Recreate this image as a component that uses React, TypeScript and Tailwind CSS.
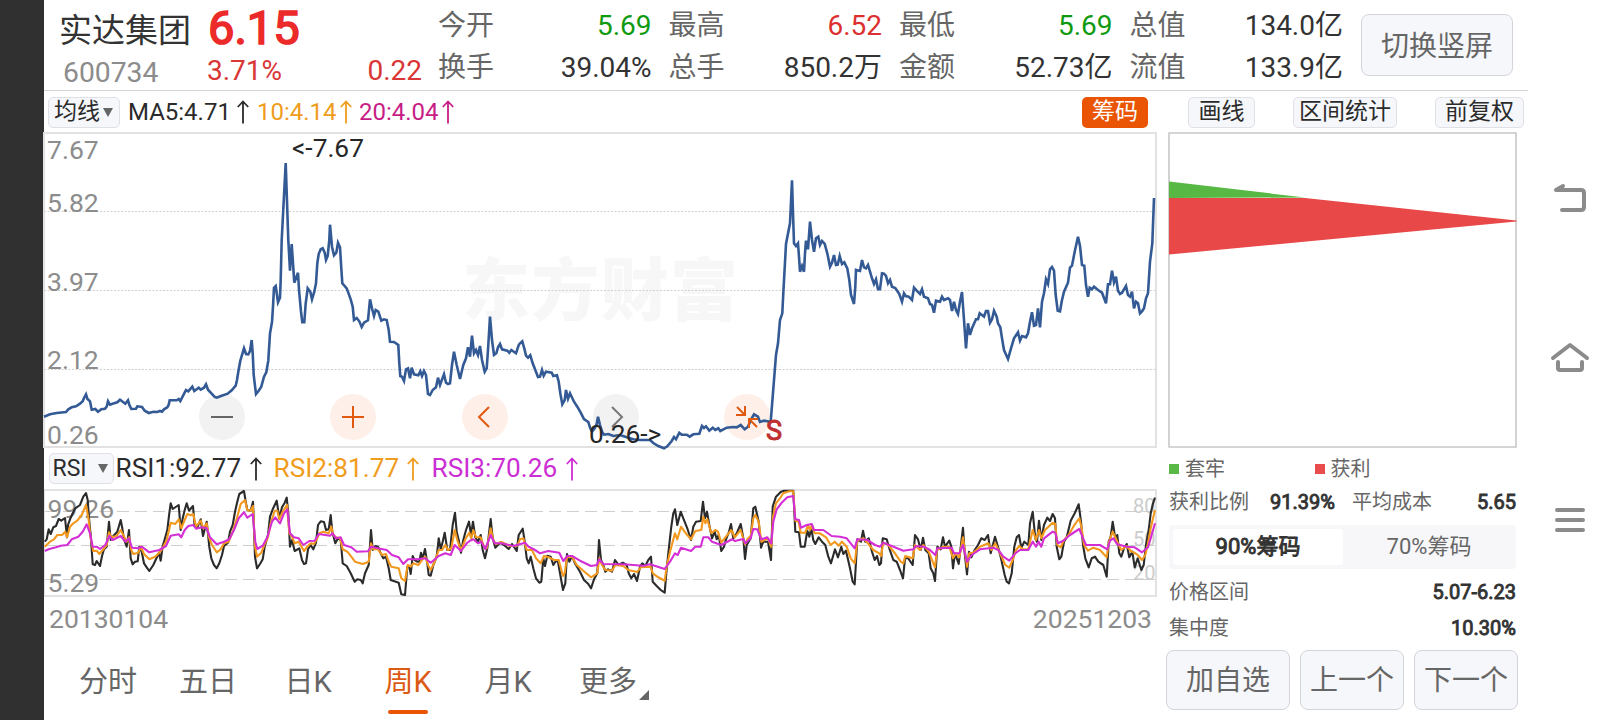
import clsx from 'clsx'

// A run of chart samples: origin in px, points in thirds of a px
type Segment = { x: number, y: number, points: string }

const price: Segment[] = [
    { x: 40, y: 240, points: '12,530 30,523 50,519 78,516 85,508 95,502 108,499 120,491 128,484 132,474 138,463 142,476 150,484 155,509 166,507 174,515 184,508 195,506 200,500 204,484 210,494 222,490 232,487 240,479 248,485 256,491 264,481 268,494 274,507 288,506 292,499 306,501 314,512 326,519 340,515 352,516 360,513 366,515 372,508 382,502 386,494 389,481 410,481 416,477 421,483 428,469 438,450 445,454 457,440 463,453 476,443 482,449 492,443 498,433 504,449 512,458 524,471 530,473 545,467 563,461 575,451 587,437 591,420 595,395 601,362 612,325 618,342 625,343 630,333 635,300 638,340 641,405 644,430 648,462 656,452 664,440 672,410 679,397 685,362 690,280 696,246 699,200 702,143 707,138 711,165 714,187 720,173 722,120 725,0 737,-231 745,0 750,92 755,12 763,128 774,98 777,150 783,215 787,247 793,247 797,190 803,145 811,155 816,178 823,155 828,130 832,70 836,42 842,28 848,25 854,38 858,60 863,48 868,0 870,-46 876,20 882,46 889,38 894,8 900,22 904,85 907,130 920,145 932,178 938,200 942,240 950,234 958,244 965,261 972,248 984,241 990,178 996,205 1002,228 1007,210 1015,215 1024,242 1032,238 1040,240 1046,270 1050,305 1062,306 1075,315 1078,370 1081,408 1086,410 1092,423 1098,388 1104,385 1110,415 1115,383 1122,403 1135,406 1141,394' },
    { x: 420, y: 240, points: '6,408 12,393 18,405 24,462 30,465 38,450 48,442 54,413 60,435 72,403 78,428 84,432 90,430 96,375 102,335 110,375 120,417 130,375 138,355 144,322 150,350 156,287 162,340 168,330 174,345 180,318 186,360 194,395 200,385 204,330 210,230 216,300 222,345 229,340 234,322 240,312 246,328 262,332 268,338 274,330 288,340 296,315 300,310 307,304 314,330 318,347 324,353 331,346 338,370 354,411 360,410 366,390 371,407 378,395 395,398 400,408 411,406 416,425 421,460 427,493 434,480 438,450 444,476 450,460 462,485 472,500 482,518 492,537 505,546 511,565 516,575 524,565 530,552 534,530 540,555 546,575 552,584 565,582 580,588 600,585 620,592 640,598 660,600 690,600 700,609 715,618 732,625 742,619 755,603 762,591 768,598 778,578 785,584 800,584 809,590 820,583 838,581 846,558 852,564 858,559 868,572 878,563 886,570 895,565 901,573 920,563 940,561 950,562 962,555 974,568 984,560 992,540 1002,523 1014,530 1020,546 1032,542 1050,545' },
    { x: 740, y: 120, points: '92,905 98,830 108,705 114,670 120,600 127,580 130,520 138,372 150,310 156,181 159,280 162,370 168,378 174,370 177,410 180,455 186,438 192,455 195,400 198,362 204,388 210,305 216,360 222,395 228,355 235,350 240,375 246,363 254,372 262,400 270,440 276,428 282,405 288,435 293,434 299,408 306,432 313,427 322,445 328,480 333,525 342,552 346,500 348,450 360,453 366,420 372,442 378,445 384,435 390,455 396,475 402,492 408,478 414,508 420,508 426,460 432,461 438,468 444,490 450,480 456,500 466,504 478,522 486,545 492,520 497,528 506,530 516,540 522,503 530,512 540,522 546,508 552,530 564,535 570,552 576,555 582,578 588,542 600,545 606,530 612,540 624,535 630,540 636,573 642,545 648,570 654,582 660,545 666,516 670,570 678,685 684,610 690,645 696,625 708,598 714,598 719,580 732,590 738,573 744,573 750,608 756,598 762,572 770,590 774,610 781,622 786,655 792,690 804,717 813,685 822,655 834,637 840,662 846,648 858,652 864,640 870,605 876,577 882,617 888,615 894,565 900,622 906,545 912,520 918,478 924,492 930,448 936,441 942,452 947,525 953,572 960,574 966,540 972,515 984,488 990,443 996,437 1004,395 1014,350 1020,378 1026,435 1033,437 1038,495 1044,530 1049,503 1056,508 1062,500 1074,510 1086,518 1098,550 1104,493 1110,493 1116,452 1122,487 1128,470 1134,512 1140,522 1146,518 1158,498 1164,525 1170,530 1176,515 1182,565 1188,545 1194,550 1200,580 1206,574 1212,565 1218,535 1224,520 1230,425 1237,370 1242,234' },
]

const rsi1: Segment[] = [
    { x: 40, y: 450, points: '14,275 20,268 26,238 32,252 40,232 48,228 56,207 64,212 75,204 81,262 84,225 90,208 98,190 106,175 120,165 130,140 138,129 143,150 147,205 152,255 158,343 165,345 170,333 180,348 186,318 192,298 200,290 207,215 212,270 220,258 232,245 242,210 247,235 252,268 260,290 267,240 272,325 278,343 285,335 293,334 298,290 305,305 312,340 320,352 328,363 340,345 357,308 362,332 368,288 374,268 382,240 388,190 392,160 398,177 416,165 422,240 428,205 434,180 440,160 447,182 459,168 464,230 472,232 482,208 489,258 500,215 508,290 514,325 522,345 530,355 538,340 546,315 552,288 564,278 570,245 578,225 585,185 592,155 598,132 612,123 617,155 622,180 632,182 639,155 645,320 651,355 660,342 668,328 674,290 684,255 690,200 698,178 710,152 718,205 726,172 734,158 740,143 745,190 750,290 756,270 764,303 778,295 786,330 792,342 798,340 804,298 812,285 820,298 828,278 834,225 842,214 852,216 858,240 866,238 872,195 877,245 886,280 894,265 902,270 908,340 920,348 932,370 944,395 952,388 962,390 968,400 975,370 986,345 993,240 998,300 1006,288 1014,290 1022,310 1030,325 1038,320 1046,355 1052,390 1076,398 1084,433 1095,435 1102,350 1108,350' },
    { x: 410, y: 450, points: '2,372 8,318 14,330 22,335 28,335 33,308 38,325 45,297 52,340 56,375 62,377 70,345 80,320 86,265 92,297 98,275 104,248 112,300 120,300 128,225 135,188 140,245 146,270 153,308 160,270 168,240 177,215 183,255 189,215 196,262 204,275 212,255 218,300 225,325 232,295 237,250 242,207 248,265 256,293 270,278 282,285 296,297 306,282 320,303 326,255 338,236 344,275 350,325 356,340 362,320 370,355 378,385 388,398 394,395 400,325 405,348 412,317 422,320 430,345 438,332 444,335 450,370 459,420 466,400 471,312 478,335 486,318 496,342 510,365 522,390 535,402 543,415 552,388 562,370 567,270 573,330 580,345 586,365 594,358 606,365 615,330 626,345 638,338 650,345 656,370 664,385 672,372 681,393 690,350 697,340 706,348 715,330 723,320 728,395 740,408 752,420 764,428 769,370 775,310 784,230 790,190 795,178 802,225 812,185 820,205 832,235 843,270 850,230 858,215 872,213 879,155 885,205 891,185 898,225 906,265 914,245 920,268 926,255 934,303 942,290 948,268 956,248 963,222 970,265 980,250 992,222 1000,265 1005,327 1010,285 1022,265 1030,175 1036,170 1046,215 1053,293 1060,275 1074,275 1083,330 1088,170 1098,140 1112,126' },
    { x: 780, y: 450, points: '12,122 40,122 46,245 57,247 62,290 74,290 82,242 88,260 94,235 100,270 106,282 116,262 126,275 136,285 145,320 153,340 165,298 174,322 184,290 190,312 198,302 210,355 218,395 224,403 232,268 243,275 249,242 256,275 266,265 276,305 284,330 291,318 298,345 303,340 308,265 320,268 328,295 340,330 350,335 360,360 369,385 375,325 385,325 398,345 405,255 414,268 422,300 429,263 436,300 446,310 452,355 460,370 465,393 472,290 482,298 489,262 495,290 508,272 514,290 519,355 525,310 536,342 549,233 554,310 561,373 567,305 574,322 584,300 594,285 604,265 614,270 624,255 632,310 645,260 654,290 663,325 674,375 680,395 687,400 695,370 703,290 710,262 717,255 724,293 733,275 745,285 750,220 758,185 766,265 771,275 777,212 784,270 792,225 802,203 810,213 818,192 825,205 830,290 838,328 844,320 852,275 860,262 872,212 884,190 896,163 903,215 909,285 916,325 926,352 935,325 945,320 955,335 970,345 980,380 986,275 992,260 998,215 1006,265 1012,255 1018,310 1024,320 1032,295 1040,282 1048,322 1057,305 1064,352 1073,325 1084,360 1091,345 1098,285 1106,240 1112,190 1119,160 1125,143' },
]

const rsi2: Segment[] = [
    { x: 40, y: 450, points: '14,290 30,275 42,268 52,255 66,255 76,245 81,262 90,230 100,220 112,212 125,195 138,165 146,210 152,265 160,303 170,302 178,312 188,300 200,285 207,247 214,262 230,258 242,240 250,255 260,275 267,262 274,300 280,312 295,308 302,290 312,312 328,328 345,320 358,308 366,298 380,270 392,218 406,222 416,208 424,235 434,210 442,192 452,196 460,192 468,230 482,212 490,235 500,220 506,260 516,285 530,307 542,298 552,280 566,275 580,240 592,200 602,162 615,150 622,180 632,182 639,168 645,290 651,320 664,308 674,282 684,262 692,220 704,182 712,182 718,208 728,185 741,165 748,250 756,260 764,280 776,275 792,303 802,290 812,280 822,282 832,265 838,250 850,245 866,250 874,230 880,255 888,262 900,265 908,298 922,305 934,320 945,335 968,342 986,335 993,280 1000,298 1014,298 1026,315 1038,312 1046,335 1054,350 1076,355 1084,385 1095,393 1103,345' },
    { x: 410, y: 450, points: '2,350 10,340 25,345 40,325 46,320 54,345 62,360 72,340 86,300 96,300 106,285 114,300 124,295 134,240 142,270 153,302 166,268 178,248 184,265 190,240 198,262 212,262 222,290 230,295 242,235 250,270 258,282 274,276 300,288 322,287 330,268 340,265 350,300 366,300 378,325 392,340 402,318 416,322 432,330 446,330 459,378 464,370 471,322 486,320 500,345 520,362 543,382 562,370 568,325 576,345 586,360 606,362 616,345 640,348 655,360 682,366 692,352 722,350 728,370 745,382 764,392 770,350 780,305 795,250 802,268 813,230 826,248 843,268 856,243 874,240 880,200 886,220 892,208 904,250 916,240 924,245 934,278 946,262 964,240 974,262 992,240 1005,283 1014,265 1022,258 1030,205 1036,195 1046,215 1054,275 1074,265 1084,290 1089,200 1098,160 1112,142' },
    { x: 780, y: 450, points: '10,130 28,124 40,124 46,212 56,215 62,248 76,248 84,225 90,240 96,225 104,250 120,250 138,262 152,285 164,275 176,287 186,275 200,290 212,325 224,340 232,272 250,265 262,278 280,300 298,310 304,318 309,278 325,285 345,310 362,335 370,340 376,318 398,325 405,285 420,300 430,285 446,305 465,352 471,300 490,290 508,290 519,325 528,310 538,322 549,262 561,350 568,310 580,308 600,290 625,280 634,300 646,280 664,318 676,345 688,353 698,330 708,300 718,288 728,298 745,298 758,240 768,270 777,240 784,265 795,240 818,218 826,222 832,285 842,292 852,270 866,255 880,230 898,205 905,235 912,285 924,302 940,293 960,300 980,322 986,278 998,245 1006,262 1014,280 1024,300 1040,288 1052,303 1066,310 1073,315 1086,330 1096,315 1104,280 1112,235 1125,180' },
]

const rsi3: Segment[] = [
    { x: 40, y: 450, points: '14,303 28,297 48,292 62,287 82,285 95,268 115,260 128,245 140,223 150,250 158,290 170,290 180,297 196,285 208,258 218,270 242,258 256,275 267,265 276,293 294,295 305,290 328,307 358,300 378,288 392,257 416,253 424,262 434,240 445,228 460,225 468,236 486,232 500,235 510,262 530,283 552,275 568,268 582,240 596,205 612,187 622,203 638,192 646,275 652,297 668,287 682,262 696,215 706,202 720,220 732,190 742,178 750,250 762,262 776,265 790,285 808,273 824,272 836,252 870,257 878,250 888,265 902,262 912,285 934,292 950,305 984,304 993,290 1014,295 1040,300 1056,315 1076,322 1090,342 1104,328' },
    { x: 410, y: 450, points: '2,328 20,328 46,325 62,338 86,318 106,310 122,315 134,285 153,303 170,280 180,272 190,268 204,280 214,275 226,297 242,255 254,280 275,280 310,288 345,278 356,290 375,300 390,310 415,303 448,308 460,333 472,318 486,318 510,332 543,348 560,345 568,328 580,342 640,343 700,347 720,343 764,357 780,335 795,310 803,315 813,293 843,303 856,290 872,290 880,262 895,262 906,275 934,285 966,268 975,273 1000,267 1006,280 1022,265 1030,237 1042,238 1054,268 1072,262 1084,280 1090,215 1100,178 1112,162' },
    { x: 780, y: 450, points: '5,158 22,142 40,138 46,208 57,210 63,233 80,225 95,222 102,240 130,240 155,258 180,260 200,265 224,295 232,268 262,270 285,285 300,290 310,278 335,288 370,302 400,298 408,288 432,290 450,300 466,315 472,295 515,293 522,310 538,310 549,285 561,335 575,315 600,298 640,293 655,300 670,320 688,332 706,310 720,300 745,300 758,275 768,290 776,275 784,290 792,265 818,245 826,248 834,280 850,272 870,255 898,237 908,262 918,285 960,285 982,298 990,272 1000,265 1012,283 1040,290 1064,292 1086,307 1104,292 1112,265 1125,220' },
]

function toPoints(segments: Segment[]) {
    return segments
        .map(s => s.points
            .split(' ')
            .map(p => p.split(',').map(Number))
            .map(([x, y]) => `${(s.x + x / 3).toFixed(1)},${(s.y + y / 3).toFixed(1)}`)
            .join(' '))
        .join(' ')
}

interface Quote {
    label: string,
    value: string,
    color: string,
}

const quotes: Quote[][] = [
    [
        { label: '今开', value: '5.69', color: 'text-[#109a10]' },
        { label: '换手', value: '39.04%', color: 'text-[#333]' },
    ],
    [
        { label: '最高', value: '6.52', color: 'text-[#dc3030]' },
        { label: '总手', value: '850.2万', color: 'text-[#333]' },
    ],
    [
        { label: '最低', value: '5.69', color: 'text-[#109a10]' },
        { label: '金额', value: '52.73亿', color: 'text-[#333]' },
    ],
    [
        { label: '总值', value: '134.0亿', color: 'text-[#333]' },
        { label: '流值', value: '133.9亿', color: 'text-[#333]' },
    ],
]

function Header() {
    return (
        <header className="flex h-[91px] border-b border-[#d4d4d4]">
            <div className="w-[163px] pl-[15px]">
                <div className="h-[52px] pt-[6px] text-[33px] leading-[50px] text-[#333] whitespace-nowrap">实达集团</div>
                <div className="pl-[4px] text-[28.3px] leading-[41px] text-[#8c8c8c]">600734</div>
            </div>
            <div className="w-[215px]">
                <div className="h-[50px] pl-[1px] text-[47px] leading-[55px] text-[#ec2a2a] [-webkit-text-stroke:1.7px]">6.15</div>
                <div className="flex justify-between text-[28px] leading-[41px] text-[#d93636]">
                    <span>3.71%</span>
                    <span>0.22</span>
                </div>
            </div>
            <div className="flex gap-[17px] pl-[16px] pt-[5px]">
                {quotes.map((group, i) => (
                    <div key={i} className="w-[213.5px]">
                        {group.map(q => (
                            <div key={q.label} className="flex justify-between text-[28px] leading-[42px]">
                                <span className="text-[#666]">{q.label}</span>
                                <span className={q.color}>{q.value}</span>
                            </div>
                        ))}
                    </div>
                ))}
            </div>
            <button className="ml-[18px] mt-[14px] h-[62px] w-[152px] rounded-lg border border-[#d3d5dc] bg-[#f6f7fa] pt-[3px] text-[28px] text-[#666]">
                切换竖屏
            </button>
        </header>
    )
}

function UpArrow({ className }: { className?: string }) {
    return (
        <svg className={clsx('shrink-0', className)} width="12" height="24" viewBox="0 0 12 24" fill="none" stroke="currentColor" strokeWidth="1.8">
            <path d="M6 23.5V1.5M0.8 7L6 1.5L11.2 7" />
        </svg>
    )
}

function DownTriangle() {
    return (
        <svg width="10" height="9" viewBox="0 0 10 9" fill="#666">
            <path d="M0 0H10L5 9Z" />
        </svg>
    )
}

const toolButton = 'h-[31px] rounded-[5px] border border-[#dfe1e6] bg-[#f6f7fa] text-[23px] leading-[28px] text-[#2b2b2b] whitespace-nowrap'

function Toolbar() {
    return (
        <div className="flex h-[41px] items-start pt-[5.5px] pl-[4px]">
            <button className={clsx(toolButton, 'flex w-[72px] items-center pl-[5px] gap-[3px]')}>
                均线
                <DownTriangle />
            </button>
            <div className="flex h-[31px] items-center pl-[8px] text-[24px] leading-[31px]">
                <div className="flex w-[129px] items-center text-[#2b2b2b]">MA5:4.71<UpArrow className="ml-auto mr-[8px]" /></div>
                <div className="flex w-[102px] items-center text-[#f09c1c]">10:4.14<UpArrow className="ml-auto mr-[7px]" /></div>
                <div className="flex w-[95px] items-center text-[#c71d85]">20:4.04<UpArrow className="ml-auto" /></div>
            </div>
            <button className="ml-auto h-[31px] w-[66px] rounded-[5px] bg-[#e95504] text-[23px] leading-[30px] text-white">筹码</button>
            <button className={clsx(toolButton, 'ml-[40px] w-[67px]')}>画线</button>
            <button className={clsx(toolButton, 'ml-[38px] w-[104px]')}>区间统计</button>
            <button className={clsx(toolButton, 'ml-[38px] mr-[4px] w-[89px]')}>前复权</button>
        </div>
    )
}

function PriceChart() {
    return (
        <svg className="block overflow-visible" width="1114" height="316" viewBox="44 132 1114 316" fill="none">
            <text x="462" y="315" textLength="276" className="fill-[#f7f7f7] text-[68px] font-black">东方财富</text>
            <path d="M44 133H1156V447H44Z" stroke="#e2e2e2" strokeWidth="2" />
            <path d="M44 211.5H1156M44 290.5H1156M44 369.5H1156" stroke="#d0d0d0" strokeDasharray="2 1.5" />
            <g className="fill-[#8c8c8c] text-[26.5px]">
                <text x="47" y="159">7.67</text>
                <text x="47" y="212">5.82</text>
                <text x="47" y="291">3.97</text>
                <text x="47" y="369">2.12</text>
                <text x="47" y="444">0.26</text>
            </g>
            <g fill="#f2f2f2">
                <circle cx="222" cy="417" r="23" />
                <circle cx="616" cy="417" r="23" />
            </g>
            <g fill="#fef0e9">
                <circle cx="353" cy="417" r="23" />
                <circle cx="485" cy="417" r="23" />
                <circle cx="747" cy="417" r="23" />
            </g>
            <polyline points={toPoints(price)} stroke="#335a94" strokeWidth="2.6" />
            <g strokeWidth="2">
                <path d="M211 417H233" stroke="#666" />
                <path d="M342 417H364M353 406V428" stroke="#e0590f" />
                <path d="M489 407L479 417L489 427" stroke="#e0590f" />
                <path d="M612 407L622 417L612 427" stroke="#777" />
                <path d="M737 407L745 415M736 415H745V406M757 427L749 419M758 419H749V428" stroke="#e0590f" />
            </g>
            <g className="fill-[#262626] text-[26.3px]">
                <text x="292" y="157">&lt;-7.67</text>
                <text x="589" y="443">0.26-&gt;</text>
            </g>
            <text x="766" y="440" className="fill-[#c03030] text-[27px] [stroke:#c03030] [stroke-width:1]">S</text>
        </svg>
    )
}

function RsiBar() {
    return (
        <div className="flex h-[41px] items-start pt-[5px] pl-[4.5px]">
            <button className={clsx(toolButton, 'flex w-[65px] items-center justify-between pl-[3px] pr-[5px]')}>
                RSI
                <DownTriangle />
            </button>
            <div className="flex h-[31px] items-center pl-[2px] text-[26.2px] leading-[31px]">
                <div className="flex w-[158px] items-center text-[#2b2b2b]">RSI1:92.77<UpArrow className="ml-auto mr-[12px]" /></div>
                <div className="flex w-[158px] items-center text-[#f09c1c]">RSI2:81.77<UpArrow className="ml-auto mr-[13px]" /></div>
                <div className="flex w-[146px] items-center text-[#cb2fd3]">RSI3:70.26<UpArrow className="ml-auto" /></div>
            </div>
        </div>
    )
}

function RsiChart() {
    return (
        <svg className="block" width="1114" height="108" viewBox="44 489 1114 108" fill="none">
            <path d="M44 490H1156V596H44Z" stroke="#e2e2e2" strokeWidth="2" />
            <path d="M45 511.5H1156M45 545.5H1156M45 579.5H1156" stroke="#cfcfcf" strokeWidth="1.2" strokeDasharray="12 6" />
            <g className="fill-[#8c8c8c] text-[26.5px]">
                <text x="47.5" y="518">99.26</text>
                <text x="47.5" y="592">5.29</text>
            </g>
            <g className="fill-[#cccccc] text-[20px]">
                <text x="1133" y="513">80</text>
                <text x="1133" y="546">50</text>
                <text x="1133" y="579.5">20</text>
            </g>
            <g strokeWidth="2.1" strokeLinejoin="round">
                <polyline points={toPoints(rsi1)} stroke="#2b2b2b" />
                <polyline points={toPoints(rsi2)} stroke="#f2981e" />
                <polyline points={toPoints(rsi3)} stroke="#d42fd4" />
            </g>
        </svg>
    )
}

const tabs = ['分时', '五日', '日K', '周K', '月K', '更多']

function Tabs() {
    return (
        <nav className="flex h-[77px] pl-[14px] text-[29px] text-[#666]">
            {tabs.map(tab => (
                <div key={tab} className={clsx('relative flex w-[100px] justify-center pt-[18px] leading-[42px]', tab === '周K' && 'text-[#dc5a14]')}>
                    {tab}
                    {tab === '周K' && <div className="absolute bottom-[6px] h-[4px] w-[40px] rounded-full bg-[#e95504]" />}
                    {tab === '更多' && (
                        <svg className="absolute right-[9px] bottom-[20px]" width="10" height="10" viewBox="0 0 10 10" fill="#666">
                            <path d="M10 0V10H0Z" />
                        </svg>
                    )}
                </div>
            ))}
        </nav>
    )
}

const strong = 'text-[#333] [-webkit-text-stroke:0.9px]'
const bottomButton = 'rounded-lg border border-[#d3d5dc] bg-[#f6f7fa] pt-[1px]'

function ChipPanel() {
    return (
        <aside className="flex w-[371px] flex-col pl-[11px]">
            <svg className="block" width="349" height="316" viewBox="1168 132 349 316">
                <path d="M1169 133H1516V447H1169Z" fill="none" stroke="#c8c8c8" strokeWidth="1.6" />
                <path d="M1169 181.5L1305 197.5L1169 198Z" fill="#57b844" />
                <path d="M1169 198H1305L1516.5 220.5V221.5L1169 254.5Z" fill="#e84848" />
            </svg>
            <div className="flex h-[41px] items-center pl-[1px] text-[20px] text-[#666]">
                <div className="flex w-[145.5px] items-center gap-[6px]">
                    <span className="size-[10px] bg-[#5ab946]" />
                    套牢
                </div>
                <div className="flex items-center gap-[6px]">
                    <span className="size-[10px] bg-[#e84c4c]" />
                    获利
                </div>
            </div>
            <div className="flex h-[25px] w-[348px] items-center pl-[1px] text-[20px] text-[#666]">
                获利比例
                <span className={clsx('ml-[21px]', strong)}>91.39%</span>
                <span className="ml-auto">平均成本</span>
                <span className={clsx('w-[84px] text-right', strong)}>5.65</span>
            </div>
            <div className="ml-[1px] mt-[11px] flex h-[44px] w-[347px] rounded bg-[#f7f7fa] p-[4px] text-[22px] leading-[36px] text-[#666]">
                <div className={clsx('w-[170px] rounded bg-white text-center', strong)}>90%筹码</div>
                <div className="flex-1 pl-[3px] text-center">70%筹码</div>
            </div>
            <div className="mt-[5px] flex h-[36px] w-[348px] items-center justify-between pl-[1px] text-[20px] text-[#666]">
                价格区间
                <span className={strong}>5.07-6.23</span>
            </div>
            <div className="flex h-[35px] w-[348px] items-center justify-between pl-[1px] text-[20px] text-[#666]">
                集中度
                <span className={strong}>10.30%</span>
            </div>
            <div className="-ml-[2px] mt-[5px] flex h-[60px] gap-[10px] text-[28px] text-[#666]">
                <button className={clsx(bottomButton, 'w-[124px]')}>加自选</button>
                <button className={clsx(bottomButton, 'w-[104px]')}>上一个</button>
                <button className={clsx(bottomButton, 'w-[104px]')}>下一个</button>
            </div>
        </aside>
    )
}

// Android system navigation, shown on the right in landscape
function SystemNav() {
    return (
        <svg className="block" width="84" height="720" viewBox="1528 0 84 720" fill="none" stroke="#8b8b8b" strokeWidth="4" strokeLinecap="round" strokeLinejoin="round">
            <path d="M1563 186L1556 190H1581Q1584 190 1584 193V207Q1584 210 1581 210H1562" />
            <path d="M1553 358L1570 345L1587 358M1558 362V368Q1558 370 1560 370H1580Q1582 370 1582 368V362" />
            <path d="M1557 510H1583M1557 520H1583M1557 530H1583" />
        </svg>
    )
}

export default function App() {
    return (
        <div className="flex h-[720px] w-[1612px] overflow-hidden bg-white font-[Roboto,'Noto_Sans_CJK_SC',sans-serif]">
            <div className="w-[44px] shrink-0 bg-[#303030]" />
            <main className="w-[1484px] shrink-0">
                <Header />
                <Toolbar />
                <div className="flex">
                    <section className="w-[1113px] shrink-0">
                        <PriceChart />
                        <RsiBar />
                        <RsiChart />
                        <div className="flex h-[46px] justify-between pl-[5px] pr-[5px] text-[26.5px] leading-[44px] text-[#8c8c8c]">
                            <span>20130104</span>
                            <span>20251203</span>
                        </div>
                        <Tabs />
                    </section>
                    <ChipPanel />
                </div>
            </main>
            <SystemNav />
        </div>
    )
}
